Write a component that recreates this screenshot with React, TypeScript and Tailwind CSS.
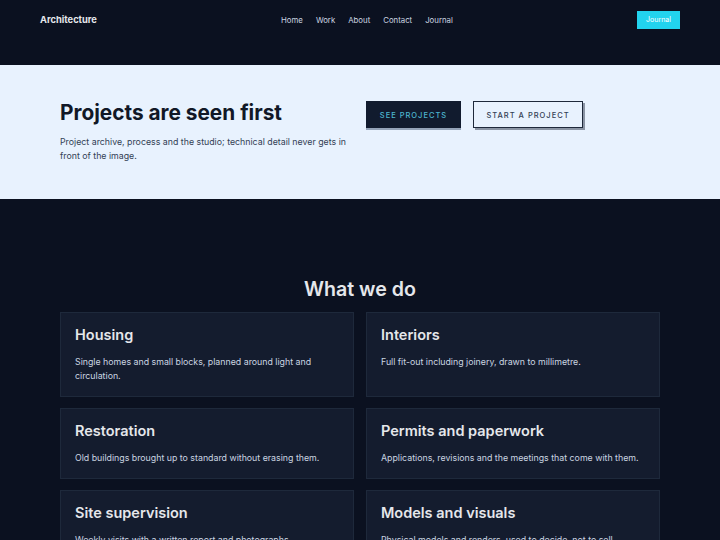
import React from "react";

const services = [
  { t: "Housing", d: "Single homes and small blocks, planned around light and circulation.", h: "h-[85px]" },
  { t: "Interiors", d: "Full fit-out including joinery, drawn to millimetre.", h: "h-[85px]" },
  { t: "Restoration", d: "Old buildings brought up to standard without erasing them.", h: "h-[71px]" },
  { t: "Permits and paperwork", d: "Applications, revisions and the meetings that come with them.", h: "h-[71px]" },
  { t: "Site supervision", d: "Weekly visits with a written report and photographs.", h: "h-[85px]" },
  { t: "Models and visuals", d: "Physical models and renders, used to decide, not to sell.", h: "h-[85px]" },
];

export default function App() {
  return (
    <div className="min-h-[540px] bg-[#0b1120] text-white" style={{ fontFamily: "Inter, 'Noto Sans', sans-serif" }}>
      <header className="h-[65px] px-[40px] pt-[11px]">
        <div className="flex h-[18px] items-center justify-between">
          <div className="text-[9.3px] font-bold text-[#e5e7eb]">Architecture</div>
          <nav className="flex items-center gap-[13px] pt-[1px] text-[7.8px] text-[#cbd5e1]">
            <span>Home</span>
            <span>Work</span>
            <span>About</span>
            <span>Contact</span>
            <span>Journal</span>
          </nav>
          <span className="flex h-[18px] w-[43px] items-center justify-center bg-[#22d3ee] text-[7px] text-white">Journal</span>
        </div>
      </header>

      <section className="h-[134px] bg-[#e8f2fe]">
        <div className="mx-auto grid w-[600px] grid-cols-2 gap-[12px] pt-[36px]">
          <div>
            <h1 className="text-[20.8px] font-bold leading-[24px] text-[#111827]">Projects are seen first</h1>
            <p className="mt-[10px] text-[8.8px] leading-[14px] text-[#334155]">
              Project archive, process and the studio; technical detail never gets in front of the image.
            </p>
          </div>
          <div className="flex items-start gap-[12px]">
            <span className="flex h-[27px] w-[95px] items-center justify-center pt-[2px] bg-[#111b2e] text-[7.5px] font-medium tracking-[1px] text-[#4db6cf] shadow-[0_2px_0_#94a3b8]">
              SEE PROJECTS
            </span>
            <span className="flex h-[27px] w-[110px] items-center justify-center pt-[2px] border border-[#1e293b] text-[7.5px] font-medium tracking-[1px] text-[#334155] shadow-[2px_2px_0_#8b95a5]">
              START A PROJECT
            </span>
          </div>
        </div>
      </section>

      <section className="pt-[78px]">
        <h2 className="text-center text-[19.6px] font-semibold leading-[24px] text-[#e5e7eb]">What we do</h2>
        <div className="mx-auto mt-[11px] grid w-[600px] grid-cols-2 gap-x-[12px] gap-y-[11px]">
          {services.map((s) => (
            <div key={s.t} className={`${s.h} border border-[#1e293b] bg-[#141c2e] px-[14px] pt-[12px]`}>
              <h3 className="text-[14.5px] font-semibold leading-[20px] text-[#e5e7eb]">{s.t}</h3>
              <p className="mt-[10px] text-[8.8px] leading-[14px] text-[#cbd5e1]">{s.d}</p>
            </div>
          ))}
        </div>
      </section>
    </div>
  );
}
